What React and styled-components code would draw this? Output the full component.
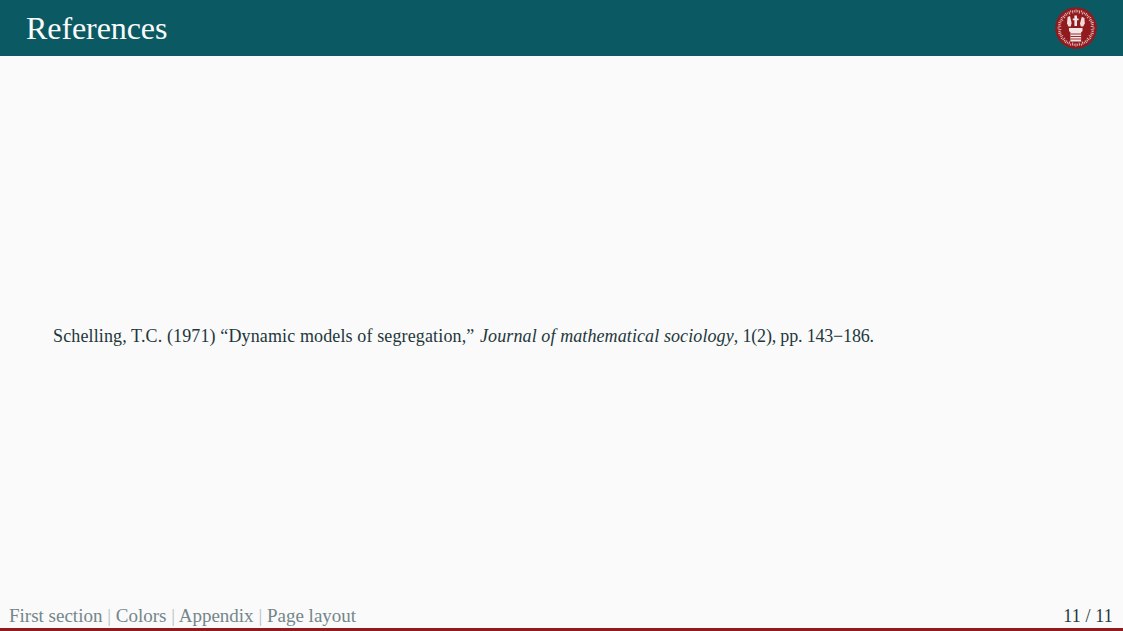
import React from "react";
import styled, { createGlobalStyle } from "styled-components";

const Global = createGlobalStyle`
  html, body {
    margin: 0;
    padding: 0;
    height: 100%;
    background: #fafafa;
  }
  #root {
    height: 100%;
  }
`;

const Slide = styled.div`
  width: 1123px;
  height: 631px;
  display: flex;
  flex-direction: column;
  overflow: hidden;
  background: #fafafa;
  font-family: "Liberation Serif", serif;
`;

const Header = styled.header`
  height: 56px;
  flex: none;
  box-sizing: border-box;
  padding: 0 26px 0 26px;
  display: flex;
  align-items: center;
  justify-content: space-between;
  background: #0b5a63;
`;

const Title = styled.h1`
  margin: 0;
  padding-top: 1px;
  font-size: 32px;
  font-weight: 400;
  letter-spacing: -0.08px;
  color: #fafafa;
`;

const Body = styled.main`
  flex: 1;
  display: flex;
  align-items: center;
  padding: 14px 53px 0;
  color: #23373b;
  font-size: 18px;
  letter-spacing: 0.13px;
`;

const Journal = styled.i`
  margin-left: 1px;
  letter-spacing: 0.1px;
`;

const Pages = styled.span`
  letter-spacing: -0.18px;
`;

const Footer = styled.footer`
  flex: none;
  height: 29px;
  box-sizing: border-box;
  padding: 2px 10px 0 9px;
  display: flex;
  align-items: center;
  justify-content: space-between;
  border-bottom: 3px solid #901a1e;
  font-size: 19px;
`;

const Crumbs = styled.span`
  color: #74868a;
`;

const Sep = styled.span`
  color: #b5bfc1;
`;

const PageNo = styled.span`
  color: #23373b;
  font-size: 18px;
  letter-spacing: 0.15px;
`;

function Seal() {
  const ticks = Array.from({ length: 60 }, (_, i) => (i * 360) / 60);
  return (
    <svg width="42" height="42" viewBox="0 0 42 42" aria-label="University seal">
      <circle cx="21" cy="21" r="20.8" fill="#901a1e" />
      {ticks.map((a, i) => (
        <rect
          key={a}
          x="20.6"
          y={i % 3 === 0 ? 2.4 : 3}
          width="0.9"
          height={i % 2 === 0 ? 3.2 : 2.2}
          fill="#e3bcbc"
          transform={`rotate(${a} 21 21)`}
        />
      ))}
      <path d="M14 21h13.5v3l-1.4 1.2v9.3H15.4v-9.3L14 24z" fill="#f4e6e6" />
      <path d="M15.5 27h10.5M15.5 29.5h10.5M15.5 32h10.5" stroke="#901a1e" strokeWidth="0.9" />
      <path d="M19.4 8.5h2.6v3h1.6v1.8H22V19h-2.6v-5.7h-1.6v-1.8h1.6z" fill="#f4e6e6" />
      <path d="M12.6 10l2.4-1 1.6 7-.8 3.4h-2.4l-1.4-3.2z" fill="#f0dcdc" />
      <path d="M29.4 11l-2.6-1.2-1.8 6.6.8 3h2.4l1.6-3z" fill="#f0dcdc" />
    </svg>
  );
}

export default function App() {
  return (
    <>
      <Global />
      <Slide>
        <Header>
          <Title>References</Title>
          <Seal />
        </Header>
        <Body>
          <span>
            Schelling, T.C. (1971) “Dynamic models of segregation,” <Journal>Journal of mathematical sociology</Journal>
            <Pages>, 1(2), pp. 143−186.</Pages>
          </span>
        </Body>
        <Footer>
          <Crumbs>
            First section <Sep>|</Sep> Colors <Sep>|</Sep> Appendix <Sep>|</Sep> Page layout
          </Crumbs>
          <PageNo>11 / 11</PageNo>
        </Footer>
      </Slide>
    </>
  );
}
